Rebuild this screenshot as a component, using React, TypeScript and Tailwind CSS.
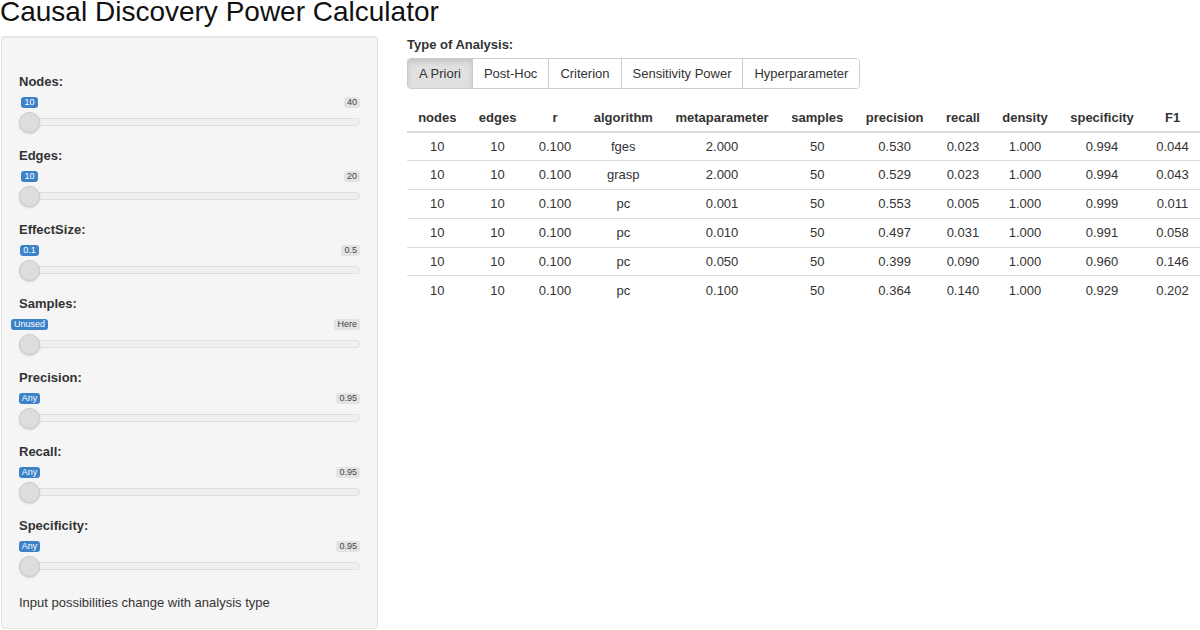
import React from "react";

const sliders = [
  { label: "Nodes:", min: "10", max: "40" },
  { label: "Edges:", min: "10", max: "20" },
  { label: "EffectSize:", min: "0.1", max: "0.5" },
  { label: "Samples:", min: "Unused", max: "Here" },
  { label: "Precision:", min: "Any", max: "0.95" },
  { label: "Recall:", min: "Any", max: "0.95" },
  { label: "Specificity:", min: "Any", max: "0.95" },
];

const tabs = ["A Priori", "Post-Hoc", "Criterion", "Sensitivity Power", "Hyperparameter"];

const headers = [
  "nodes",
  "edges",
  "r",
  "algorithm",
  "metaparameter",
  "samples",
  "precision",
  "recall",
  "density",
  "specificity",
  "F1",
];

const rows = [
  ["10", "10", "0.100", "fges", "2.000", "50", "0.530", "0.023", "1.000", "0.994", "0.044"],
  ["10", "10", "0.100", "grasp", "2.000", "50", "0.529", "0.023", "1.000", "0.994", "0.043"],
  ["10", "10", "0.100", "pc", "0.001", "50", "0.553", "0.005", "1.000", "0.999", "0.011"],
  ["10", "10", "0.100", "pc", "0.010", "50", "0.497", "0.031", "1.000", "0.991", "0.058"],
  ["10", "10", "0.100", "pc", "0.050", "50", "0.399", "0.090", "1.000", "0.960", "0.146"],
  ["10", "10", "0.100", "pc", "0.100", "50", "0.364", "0.140", "1.000", "0.929", "0.202"],
];

function Slider({ label, min, max }: { label: string; min: string; max: string }) {
  return (
    <div className="h-[74px] flex flex-col">
      <div className="h-[18px] leading-[18px] text-[13px] font-bold text-[#333]">{label}</div>
      <div className="mt-[6px] h-[11px] flex items-center justify-between">
        <div className="w-[21px] flex justify-center">
          <span className="shrink-0 whitespace-nowrap bg-[#3b82c9] text-white text-[9px] leading-[11px] px-[3px] rounded-[3px]">
            {min}
          </span>
        </div>
        <span className="whitespace-nowrap bg-[#e3e3e3] text-[#444] text-[9px] leading-[11px] px-[3px] rounded-[3px]">
          {max}
        </span>
      </div>
      <div className="mt-[3px] h-[22px] relative flex items-center">
        <div className="w-full h-[8px] rounded-full bg-[#efefef] border border-[#dedede]" />
        <div className="absolute left-0 top-[0.5px] w-[21px] h-[21px] rounded-full bg-[#dddddd] border border-[#cbcbcb] shadow-[0_1px_2px_rgba(0,0,0,0.15)]" />
      </div>
    </div>
  );
}

export default function App() {
  return (
    <div
      className="w-[1200px] h-[630px] overflow-hidden bg-white text-[#333]"
      style={{ fontFamily: '"Liberation Sans", Arial, sans-serif' }}
    >
      <h1 className="text-[28px] leading-[24px] h-[24px] text-[#111] font-normal whitespace-nowrap">
        Causal Discovery Power Calculator
      </h1>
      <div className="flex mt-[12px]">
        <div className="ml-[1px] w-[377px] h-[593px] shrink-0 bg-[#f5f5f5] border border-[#e3e3e3] rounded-[4px] shadow-[inset_0_1px_1px_rgba(0,0,0,0.05)] pt-[36px] pl-[17px] pr-[17px]">
          {sliders.map((s) => (
            <Slider key={s.label} {...s} />
          ))}
          <div className="mt-[3px] text-[13px] leading-[18px] text-[#333]">
            Input possibilities change with analysis type
          </div>
        </div>
        <div className="ml-[29px] flex-1 pt-[1px]">
          <div className="text-[13px] leading-[16px] font-bold text-[#333]">Type of Analysis:</div>
          <div className="mt-[5px] inline-flex h-[31px] border border-[#cccccc] rounded-[4px] overflow-hidden">
            {tabs.map((t, i) => (
              <div
                key={t}
                className={
                  i === 0
                    ? "h-full flex items-center px-[11px] text-[13px] text-[#333] bg-[#e0e0e0] shadow-[inset_0_3px_5px_rgba(0,0,0,0.125)]"
                    : "h-full flex items-center px-[11px] text-[13px] text-[#333] bg-white border-l border-[#cccccc]"
                }
              >
                {t}
              </div>
            ))}
          </div>
          <table className="mt-[15px] w-full border-collapse text-[13px]">
            <thead>
              <tr className="h-[28px] border-b-2 border-[#dddddd]">
                {headers.map((h) => (
                  <th key={h} className="px-[11px] font-bold text-center whitespace-nowrap text-[#333]">
                    {h}
                  </th>
                ))}
              </tr>
            </thead>
            <tbody>
              {rows.map((r, i) => (
                <tr key={i} className={i === 0 ? "h-[28.8px]" : "h-[28.8px] border-t border-[#dddddd]"}>
                  {r.map((c, j) => (
                    <td key={j} className="px-[11px] text-center whitespace-nowrap text-[#333]">
                      {c}
                    </td>
                  ))}
                </tr>
              ))}
            </tbody>
          </table>
        </div>
      </div>
    </div>
  );
}
